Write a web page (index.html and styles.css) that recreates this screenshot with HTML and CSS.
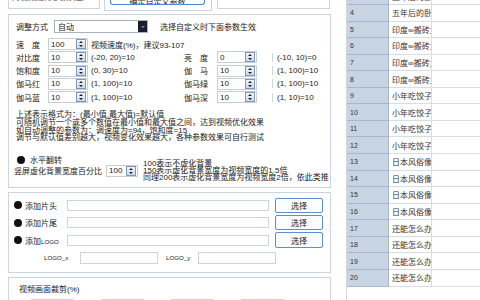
FILE: index.html
```html
<!DOCTYPE html>
<html lang="zh-CN">
<head>
    <meta charset="UTF-8">
    <title>视频参数调整</title>
    <link rel="stylesheet" href="styles.css">
</head>
<body>
<div class="page">
    <div class="left">
        <div class="toprow">
            <div class="stub stub-a"><span>对视频进行参数调整</span></div>
            <div class="stub stub-b"><div class="stub-btn">确定自定义参数</div></div>
            <div class="stub stub-c"></div>
        </div>

        <div class="panel main">
            <div class="mode-row">
                <span class="mode-label">调整方式</span>
                <div class="select"><span>自动</span><span class="select-arrow"></span></div>
                <span class="hint">选择自定义时下面参数生效</span>
            </div>

            <div class="params">
                <span>速　度</span>
                <div class="field"><span>100</span><span class="spin"></span></div>
                <span class="range wide">视频速度(%)，建议93-107</span>

                <span>对比度</span>
                <div class="field"><span>10</span><span class="spin"></span></div>
                <span class="range">(-20, 20)=10</span>
                <span>亮　度</span>
                <div class="field"><span>0</span><span class="spin"></span></div>
                <span class="range right">(-10, 10)=0</span>

                <span>饱和度</span>
                <div class="field"><span>10</span><span class="spin"></span></div>
                <span class="range">(0, 30)=10</span>
                <span>伽　马</span>
                <div class="field"><span>10</span><span class="spin"></span></div>
                <span class="range right">(1, 100)=10</span>

                <span>伽马红</span>
                <div class="field"><span>10</span><span class="spin"></span></div>
                <span class="range">(1, 100)=10</span>
                <span>伽马绿</span>
                <div class="field"><span>10</span><span class="spin"></span></div>
                <span class="range right">(1, 100)=10</span>

                <span>伽马蓝</span>
                <div class="field"><span>10</span><span class="spin"></span></div>
                <span class="range">(1, 100)=10</span>
                <span>伽马深</span>
                <div class="field"><span>10</span><span class="spin"></span></div>
                <span class="range right">(1, 10)=10</span>
            </div>

            <div class="note">
                <div>上述表示格式为：(最小值,最大值)=默认值</div>
                <div>可随机调节一个或多个数值在最小值和最大值之间，达到视频优化效果</div>
                <div>如自动调整的参数为：调速度为=94，饱和度=15</div>
                <div>调节与默认值差别越大，视频变化效果越大，各种参数效果可自行测试</div>
            </div>

            <div class="flip"><span class="radio"></span><span>水平翻转</span></div>

            <div class="blur-row">
                <span class="blur-label">竖屏虚化背景宽度百分比</span>
                <div class="field small"><span>100</span><span class="spin"></span></div>
                <div class="blur-notes">
                    <div>100表示不虚化背景</div>
                    <div>150表示虚化背景宽度为视频宽度的1.5倍</div>
                    <div>同理200表示虚化背景宽度为视频宽度2倍，依此类推</div>
                </div>
            </div>
        </div>

        <div class="panel extras">
            <div class="file-row">
                <span class="radio"></span><span class="file-label">添加片头</span>
                <div class="path"></div><button class="pick">选择</button>
            </div>
            <div class="file-row">
                <span class="radio"></span><span class="file-label">添加片尾</span>
                <div class="path"></div><button class="pick">选择</button>
            </div>
            <div class="file-row">
                <span class="radio"></span><span class="file-label">添加<small>LOGO</small></span>
                <div class="path"></div><button class="pick">选择</button>
            </div>
            <div class="logo-row">
                <span class="logo-x">LOGO_x</span><div class="path logo-in"></div>
                <span class="logo-y">LOGO_y</span><div class="path logo-in"></div>
            </div>
        </div>

        <div class="panel crop">
            <div class="crop-title">视频画面裁剪(%)</div>
            <div class="crop-row">
                <div class="path crop-in"></div>
                <div class="path crop-in"></div>
                <div class="path crop-in"></div>
                <div class="path crop-in"></div>
            </div>
        </div>
    </div>

    <div class="right">
        <div class="list">
            <div class="row"><span class="num">3</span><span class="name">五年后的卧室</span><span></span></div>
            <div class="row"><span class="num">4</span><span class="name">五年后的卧室</span><span></span></div>
            <div class="row"><span class="num">5</span><span class="name">印度∞搬砖大</span><span></span></div>
            <div class="row"><span class="num">6</span><span class="name">印度∞搬砖大</span><span></span></div>
            <div class="row"><span class="num">7</span><span class="name">印度∞搬砖大</span><span></span></div>
            <div class="row"><span class="num">8</span><span class="name">印度∞搬砖大</span><span></span></div>
            <div class="row"><span class="num">9</span><span class="name">小年吃饺子</span><span></span></div>
            <div class="row"><span class="num">10</span><span class="name">小年吃饺子</span><span></span></div>
            <div class="row"><span class="num">11</span><span class="name">小年吃饺子</span><span></span></div>
            <div class="row"><span class="num">12</span><span class="name">小年吃饺子</span><span></span></div>
            <div class="row"><span class="num">13</span><span class="name">日本风俗像</span><span></span></div>
            <div class="row"><span class="num">14</span><span class="name">日本风俗像</span><span></span></div>
            <div class="row"><span class="num">15</span><span class="name">日本风俗像</span><span></span></div>
            <div class="row"><span class="num">16</span><span class="name">日本风俗像</span><span></span></div>
            <div class="row"><span class="num">17</span><span class="name">还能怎么办</span><span></span></div>
            <div class="row"><span class="num">18</span><span class="name">还能怎么办</span><span></span></div>
            <div class="row"><span class="num">19</span><span class="name">还能怎么办</span><span></span></div>
            <div class="row"><span class="num">20</span><span class="name">还能怎么办</span><span></span></div>
        </div>
    </div>
</div>
</body>
</html>
```

FILE: styles.css
```css
body {
    margin: 0;
    width: 480px;
    height: 300px;
    overflow: hidden;
    background-color: #fff;
    color: #222;
    font-family: "Liberation Sans", "Noto Sans CJK SC", sans-serif;
    font-size: 8px;
}

.page {
    display: flex;
    height: 300px;
}

.left {
    width: 323px;
    margin-left: 8px;
    flex-shrink: 0;
}

/* top strip: the bottoms of panels scrolled out of view */
.toprow {
    display: flex;
    align-items: flex-start;
    height: 11px;
}

.stub {
    box-sizing: border-box;
    border: 1px solid #ccd5df;
    border-top: none;
    overflow: hidden;
}

.stub-a {
    width: 92px;
    height: 9px;
    color: #555;
}

.stub-a span {
    display: block;
    margin: -6px 0 0 3px;
    line-height: 8px;
    white-space: nowrap;
}

.stub-b {
    width: 108px;
    height: 11px;
    margin-left: 4px;
}

.stub-btn {
    box-sizing: border-box;
    width: 95px;
    height: 5px;
    margin-left: 5px;
    border: 1px solid #4a86d8;
    border-top: none;
    border-radius: 0 0 3px 3px;
    overflow: hidden;
    text-align: center;
    line-height: 6px;
}

.stub-c {
    width: 113px;
    height: 9px;
    margin-left: 5px;
}

.panel {
    box-sizing: border-box;
    border: 1px solid #ccd5df;
}

.main {
    margin-top: 3px;
    height: 174px;
    padding: 5px 0 0 7px;
}

.mode-row {
    display: flex;
    align-items: center;
    height: 13px;
}

.mode-label {
    width: 38px;
}

.select {
    box-sizing: border-box;
    width: 94px;
    height: 13px;
    padding-left: 3px;
    border: 1px solid #a7b1bf;
    display: flex;
    align-items: center;
    justify-content: space-between;
}

.select-arrow {
    width: 9px;
    height: 11px;
    background-color: #1c1f2b;
    display: flex;
    align-items: center;
    justify-content: center;
}

.select-arrow::after {
    content: "";
    border-left: 2px solid transparent;
    border-right: 2px solid transparent;
    border-top: 2px solid #4f94e0;
}

.hint {
    margin-left: 12px;
}

.params {
    margin-top: 5px;
    display: grid;
    grid-template-columns: 32px 40px 96px 33px 40px 1fr;
    grid-auto-rows: 12px;
    row-gap: 1.3px;
    align-items: center;
    white-space: nowrap;
}

.range {
    padding-left: 3px;
}

.range.right {
    padding-left: 4px;
}

.range.wide {
    grid-column: 3 / -1;
}

.field {
    box-sizing: border-box;
    height: 12px;
    padding: 0 1px 0 2px;
    border: 1px solid #c6ced8;
    background-color: #fff;
    display: flex;
    align-items: center;
    justify-content: space-between;
}

.spin {
    box-sizing: border-box;
    width: 10px;
    height: 10px;
    border: 1px solid #7d97b8;
    background: linear-gradient(#f3f7fc, #cbd9ea);
    display: flex;
    flex-direction: column;
    align-items: center;
    justify-content: space-around;
}

.spin::before,
.spin::after {
    content: "";
    border-left: 2.5px solid transparent;
    border-right: 2.5px solid transparent;
}

.spin::before {
    border-bottom: 2.5px solid #222;
}

.spin::after {
    border-top: 2.5px solid #222;
}

.note {
    margin-top: 8px;
    line-height: 7.7px;
    white-space: nowrap;
}

.flip {
    display: flex;
    align-items: center;
    gap: 5px;
    height: 9px;
    margin: 13px 0 0 1px;
}

.radio {
    width: 8px;
    height: 8px;
    border-radius: 50%;
    background-color: #111;
    flex-shrink: 0;
}

.blur-row {
    display: flex;
    align-items: center;
    height: 22px;
    margin: -4.5px 0 0 -2px;
    white-space: nowrap;
}

.blur-label {
    width: 92px;
}

.field.small {
    width: 32px;
}

.blur-notes {
    margin-left: 5px;
    line-height: 7.3px;
}

.extras {
    margin-top: 4px;
    height: 81px;
    padding: 4.7px 0 0 5px;
}

.file-row {
    display: flex;
    align-items: center;
    height: 15.5px;
    margin-bottom: 1.8px;
}

.file-label {
    width: 42px;
    margin-left: 3px;
    white-space: nowrap;
}

.file-label small,
.logo-x,
.logo-y {
    font-size: 6.2px;
}

.path {
    box-sizing: border-box;
    width: 202px;
    height: 11px;
    border: 1px solid #cdd4dd;
    background-color: #fff;
}

.pick {
    box-sizing: border-box;
    width: 48px;
    height: 15.5px;
    margin-left: 6px;
    padding: 0;
    border: 1px solid #5a8fd6;
    border-radius: 2px;
    background-color: #fbfcfe;
    font-family: inherit;
    font-size: 8px;
    color: #222;
}

.logo-row {
    display: flex;
    align-items: center;
    height: 12px;
    margin-top: 4px;
}

.logo-x {
    width: 36px;
    margin-left: 30px;
}

.logo-y {
    width: 32px;
    margin-left: 8px;
}

.path.logo-in {
    width: 78px;
    height: 12px;
}

.crop {
    margin-top: 4px;
    height: 60px;
    padding: 7px 0 0 10px;
}

.crop-title {
    line-height: 10px;
}

.crop-row {
    display: flex;
    gap: 27px;
    margin: 4px 0 0 12px;
}

.path.crop-in {
    width: 43px;
    height: 12px;
}

/* right side list */
.right {
    flex: 1;
    margin-left: 15px;
    border-left: 1px solid #cfd7e1;
    overflow: hidden;
}

.list {
    margin-top: -11.6px;
}

.row {
    display: grid;
    grid-template-columns: 42px 43px 1fr;
    height: 16.57px;
}

.row > span {
    box-sizing: border-box;
    border-bottom: 1px solid #d5dde7;
    display: flex;
    align-items: center;
    overflow: hidden;
    white-space: nowrap;
}

.row .num {
    padding-left: 3px;
    background-color: #c7d4e4;
    border-bottom-color: #a8b8cc;
    border-right: 1px solid #a8b8cc;
    font-size: 7px;
    color: #333;
}

.row .name {
    padding-left: 3px;
    border-right: 1px solid #d5dde7;
    color: #333;
}
```
